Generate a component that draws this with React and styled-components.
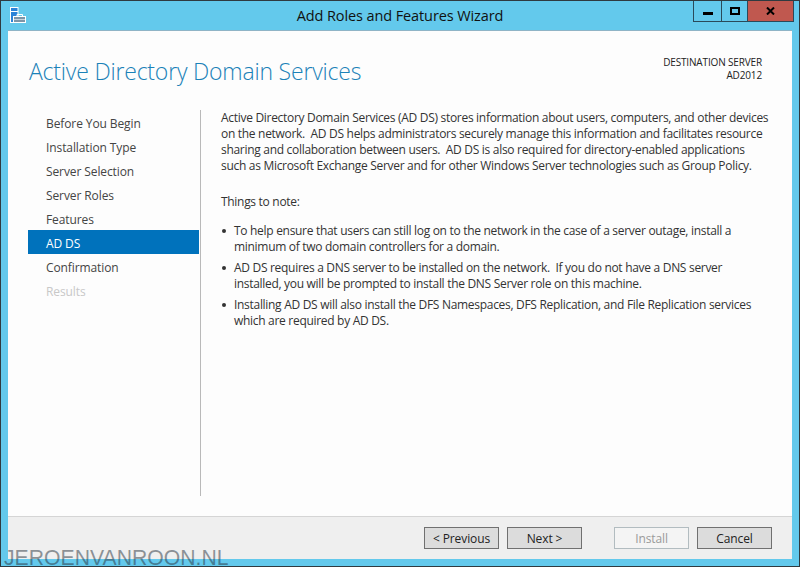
import React from "react";
import styled, { createGlobalStyle } from "styled-components";

const Global = createGlobalStyle`
  html, body { margin: 0; padding: 0; background: #2b2b2b; }
  #root { width: 800px; height: 567px; }
`;

const Window = styled.div`
  position: relative;
  box-sizing: border-box;
  width: 800px;
  height: 567px;
  background: #63c9ec;
  border: 1px solid #2f3a40;
  display: flex;
  flex-direction: column;
  font-family: "Open Sans", "Noto Sans", sans-serif;
  font-size: 12px;
  color: #333;
`;
const TitleBar = styled.div`
  height: 29px;
  flex: none;
  display: grid;
  grid-template-columns: 1fr auto 1fr;
  align-items: start;
`;
const AppIcon = styled.svg`
  width: 17px;
  height: 17px;
  margin: 6px 0 0 9px;
  display: block;
`;
const Title = styled.div`
  font-size: 14.5px;
  line-height: 20px;
  margin-top: 5px;
  color: #111;
  letter-spacing: -0.1px;
`;
const Controls = styled.div`
  justify-self: end;
  display: flex;
  margin-right: 5px;
  height: 20px;
  border: 1px solid #2a4a5a;
  border-top: none;
`;
const Ctl = styled.div`
  width: ${p => p.$w}px;
  height: 20px;
  display: flex;
  align-items: center;
  justify-content: center;
  background: ${p => p.$bg || "transparent"};
  border-left: ${p => (p.$first ? "none" : "1px solid #2a4a5a")};
`;
const Body = styled.div`
  flex: 1;
  margin: 0 7px 7px 7px;
  background: #fdfdfd;
  display: flex;
  flex-direction: column;
  border-top: 1px solid #8fb4c6;
`;
const Header = styled.div`
  height: 79px;
  flex: none;
  display: flex;
  justify-content: space-between;
  box-sizing: border-box;
  padding: 0 30px 0 21px;
`;
const PageTitle = styled.h1`
  margin: 22px 0 0;
  font-size: 23px;
  font-weight: 300;
  line-height: 36px;
  color: #1b82b8;
  font-family: "Open Sans", sans-serif;
  letter-spacing: -0.2px;
`;
const Dest = styled.div`
  margin-top: 25px;
  text-align: right;
  font-size: 10px;
  line-height: 13px;
  color: #222;
  letter-spacing: -0.15px;
`;
const Main = styled.div`
  flex: 1;
  display: flex;
  min-height: 0;
`;
const Nav = styled.nav`
  width: 171px;
  margin-left: 20px;
  flex: none;
`;
const NavItem = styled.div`
  height: 24px;
  line-height: 28px;
  padding-left: 18px;
  letter-spacing: -0.1px;
  background: ${p => (p.$active ? "#0072bc" : "transparent")};
  color: ${p => (p.$active ? "#fff" : p.$disabled ? "#c8c8c8" : "#444")};
`;
const Content = styled.div`
  flex: 1;
  margin: 0 0 20px 1px;
  border-left: 1px solid #b9b9b9;
  padding: 0 20px 0 20px;
  letter-spacing: -0.3px;
  line-height: 16px;
  color: #333;
`;
const Para = styled.p`
  margin: 0;
  white-space: pre;
`;
const Note = styled.p`
  margin: 20px 0 13px;
`;
const Bullets = styled.ul`
  margin: 0;
  padding: 0;
  list-style: none;
`;
const Bullet = styled.li`
  position: relative;
  padding-left: 13px;
  margin-bottom: 5px;
  white-space: pre;
  &::before {
    content: "";
    position: absolute;
    left: 1px;
    top: 6px;
    width: 4px;
    height: 4px;
    border-radius: 50%;
    background: #333;
  }
`;
const Footer = styled.div`
  height: 43px;
  flex: none;
  box-sizing: border-box;
  background: #efefef;
  border-top: 1px solid #d5d5d5;
  display: flex;
  padding: 10px 20px 0 416px;
`;
const Button = styled.div`
  width: 73px;
  height: 20px;
  margin-left: ${p => p.$ml || 0}px;
  border: 1px solid ${p => (p.$disabled ? "#b2bcc0" : "#707070")};
  background: ${p => (p.$disabled ? "#f4f4f4" : "#dcdcdc")};
  color: ${p => (p.$disabled ? "#9a9a9a" : "#222")};
  text-align: center;
  line-height: 22px;
  letter-spacing: -0.1px;
`;
const Watermark = styled.div`
  position: absolute;
  left: 3px;
  bottom: 0;
  font-family: "Liberation Sans", Arial, sans-serif;
  font-size: 21.2px;
  line-height: 16px;
  color: rgba(40, 50, 60, 0.5);
`;

const steps = ["Before You Begin", "Installation Type", "Server Selection", "Server Roles", "Features", "AD DS", "Confirmation", "Results"];

export default function App() {
  return (
    <Window>
      <Global />
      <TitleBar>
        <AppIcon viewBox="0 0 17 17">
          <rect x="0.5" y="0.5" width="7.5" height="15" fill="#2a83d8" stroke="#fff" />
          <rect x="1" y="4" width="7" height="1" fill="#fff" />
          <path d="M7 9.5V7.5h5.5v2" fill="none" stroke="#fff" />
          <rect x="3.5" y="9.5" width="12" height="6" fill="#7d95a8" stroke="#fff" />
          <rect x="4" y="12" width="11" height="1" fill="#c8d4dc" />
        </AppIcon>
        <Title>Add Roles and Features Wizard</Title>
        <Controls>
          <Ctl $w={27} $first>
            <svg width="10" height="8"><rect y="5" width="10" height="3" fill="#000" /></svg>
          </Ctl>
          <Ctl $w={25}>
            <svg width="10" height="8"><rect x="1" y="1" width="8" height="6" fill="none" stroke="#000" strokeWidth="2" /></svg>
          </Ctl>
          <Ctl $w={45} $bg="#c0584f">
            <svg width="9" height="8"><path d="M1 0.5l7 7M8 0.5l-7 7" stroke="#000" strokeWidth="2" fill="none" /></svg>
          </Ctl>
        </Controls>
      </TitleBar>
      <Body>
        <Header>
          <PageTitle>Active Directory Domain Services</PageTitle>
          <Dest>DESTINATION SERVER<br />AD2012</Dest>
        </Header>
        <Main>
          <Nav>
            {steps.map(s => (
              <NavItem key={s} $active={s === "AD DS"} $disabled={s === "Results"}>{s}</NavItem>
            ))}
          </Nav>
          <Content>
            <Para>{"Active Directory Domain Services (AD DS) stores information about users, computers, and other devices\non the network.  AD DS helps administrators securely manage this information and facilitates resource\nsharing and collaboration between users.  AD DS is also required for directory-enabled applications\nsuch as Microsoft Exchange Server and for other Windows Server technologies such as Group Policy."}</Para>
            <Note>Things to note:</Note>
            <Bullets>
              <Bullet>{"To help ensure that users can still log on to the network in the case of a server outage, install a\nminimum of two domain controllers for a domain."}</Bullet>
              <Bullet>{"AD DS requires a DNS server to be installed on the network.  If you do not have a DNS server\ninstalled, you will be prompted to install the DNS Server role on this machine."}</Bullet>
              <Bullet>{"Installing AD DS will also install the DFS Namespaces, DFS Replication, and File Replication services\nwhich are required by AD DS."}</Bullet>
            </Bullets>
          </Content>
        </Main>
        <Footer>
          <Button>&lt; Previous</Button>
          <Button $ml={8}>Next &gt;</Button>
          <Button $ml={32} $disabled>Install</Button>
          <Button $ml={8}>Cancel</Button>
        </Footer>
      </Body>
      <Watermark>JEROENVANROON.NL</Watermark>
    </Window>
  );
}
